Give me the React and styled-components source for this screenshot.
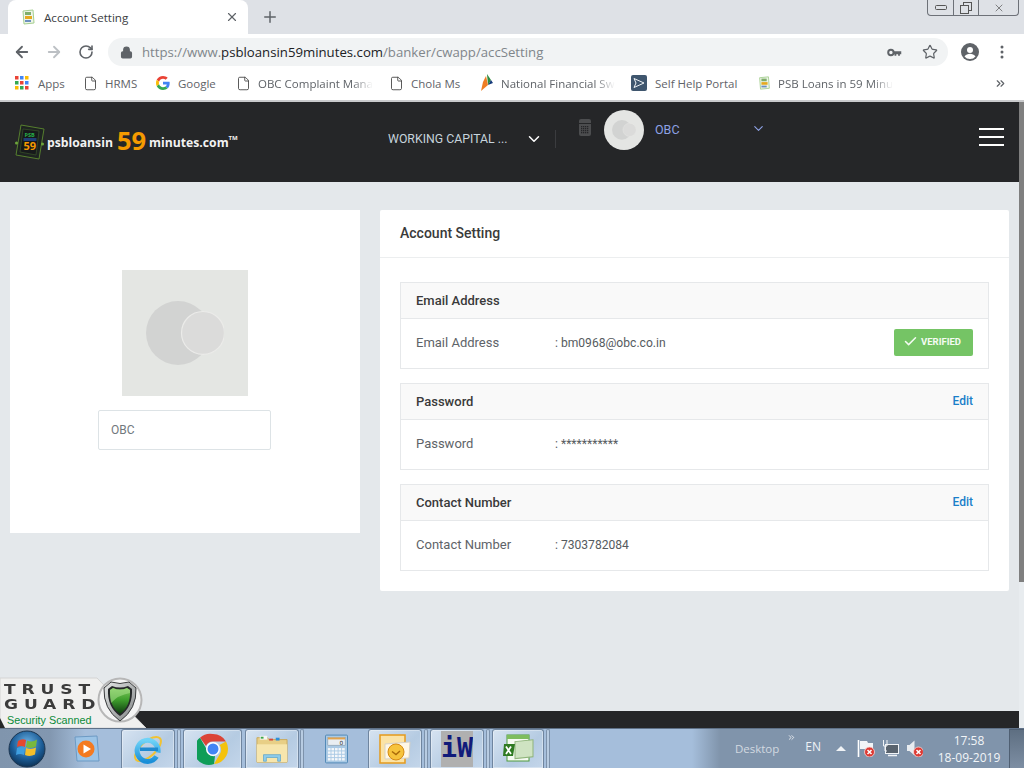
import React from 'react';
import styled, { createGlobalStyle } from 'styled-components';
import { ArrowLeft, ArrowRight, RotateCw, Lock, Star, X, Plus, File, Check, ChevronDown, ChevronsRight } from 'lucide-react';

const Global = createGlobalStyle`
  html, body { margin: 0; padding: 0; }
  body { font-family: Roboto, "Liberation Sans", sans-serif; background: #e4e8eb; }
  * { box-sizing: border-box; }
`;

const Screen = styled.div`
  position: relative;
  width: 1024px;
  height: 768px;
  overflow: hidden;
  display: flex;
  flex-direction: column;
`;

/* browser chrome */
const TabStrip = styled.div`
  height: 34px;
  background: #dee1e6;
  display: flex;
  align-items: flex-end;
  padding-left: 8px;
`;
const Tab = styled.div`
  width: 240px;
  height: 34px;
  background: #fff;
  border-radius: 8px 8px 0 0;
  display: flex;
  align-items: center;
  padding: 0 9px 0 12px;
  font-family: "Open Sans", sans-serif;
  font-size: 11.6px;
  color: #3c4043;
`;
const TabTitle = styled.span`
  flex: 1;
  margin-left: 8px;
`;
const NewTab = styled.div`
  margin: 0 0 4px 13px;
  height: 26px;
  display: flex;
  align-items: center;
  color: #5f6368;
`;
const WinControls = styled.div`
  margin: 0 5px 18px auto;
  width: 92px;
  height: 16px;
  display: flex;
  border: 1px solid #6d7178;
  border-top: none;
  border-radius: 0 0 4px 4px;
  color: #555;
`;
const WinButton = styled.div`
  width: ${p => p.$w}px;
  flex: none;
  display: flex;
  align-items: center;
  justify-content: center;
  & + & { border-left: 1px solid #6d7178; }
`;
const Toolbar = styled.div`
  height: 32px;
  background: #fff;
  display: flex;
  align-items: flex-end;
  color: #5f6368;
`;
const NavIcon = styled.div`
  width: 32px;
  height: 28px;
  display: flex;
  align-items: center;
  justify-content: center;
  color: ${p => p.$muted ? '#bcc0c4' : '#5f6368'};
`;
const NavGroup = styled.div`
  display: flex;
  padding-left: 6px;
  width: 108px;
`;
const Omnibox = styled.div`
  width: 840px;
  height: 28px;
  border-radius: 14px;
  background: #f1f3f4;
  display: flex;
  align-items: center;
  padding: 0 10px 0 12px;
  font-family: "Open Sans", sans-serif;
  font-size: 13.2px;
  color: #80868b;
`;
const UrlText = styled.span`
  flex: 1;
  margin-left: 9px;
  white-space: nowrap;
`;
const UrlHost = styled.span`
  color: #202124;
`;
const OmniIcon = styled.div`
  display: flex;
  align-items: center;
  margin-left: ${p => p.$gap || 0}px;
  color: #5f6368;
`;
const ToolbarEnd = styled.div`
  display: flex;
  align-items: center;
  height: 28px;
  margin-left: 13px;
  gap: 21px;
`;
const Bookmarks = styled.div`
  height: 36px;
  background: #fff;
  border-bottom: 2px solid #c9cacc;
  display: flex;
  align-items: center;
  padding-left: 15px;
  font-family: "Open Sans", sans-serif;
  font-size: 11.5px;
  color: #5f6368;
`;
const Bookmark = styled.div`
  width: ${p => p.$w}px;
  display: flex;
  align-items: center;
  flex: none;
  white-space: nowrap;
`;
const BookmarkLabel = styled.span`
  margin-left: ${p => p.$gap || 7}px;
  ${p => p.$fade && `
    -webkit-mask-image: linear-gradient(to right, #000 82%, transparent);
    mask-image: linear-gradient(to right, #000 82%, transparent);
  `}
`;
const BookmarkMore = styled.div`
  margin-left: auto;
  margin-right: 17px;
  display: flex;
  color: #5f6368;
`;

/* page */
const Viewport = styled.div`
  flex: 1;
  display: flex;
  min-height: 0;
`;
const Page = styled.div`
  flex: 1;
  display: flex;
  flex-direction: column;
  background: #e4e8eb;
`;
const ScrollTrack = styled.div`
  width: 5px;
  background: #e8ecef;
`;
const ScrollThumb = styled.div`
  height: 480px;
  background: #7f7f7f;
`;
const Header = styled.header`
  height: 80px;
  background: #252628;
  display: flex;
  align-items: flex-start;
  flex: none;
`;
const Logo = styled.div`
  width: 388px;
  height: 62px;
  padding: 18px 0 0 15px;
  display: flex;
  align-items: center;
  font-family: "Open Sans", sans-serif;
  font-weight: 700;
  color: #f2f2f2;
  font-size: 12.2px;
`;
const LogoWord = styled.span`
  margin-left: ${p => p.$gap || 0}px;
`;
const LogoNum = styled.span`
  margin: -4px 3px 0 4px;
  font-size: 25.500px;
  color: #f59a00;
`;
const LogoTm = styled.sup`
  font-size: 6px;
  margin-top: -8px;
  align-self: center;
`;
const Product = styled.div`
  width: 167px;
  height: 18px;
  margin-top: 28px;
  display: flex;
  align-items: center;
  justify-content: space-between;
  padding-right: 13px;
  font-size: 12.3px;
  color: #c6d3dc;
  white-space: nowrap;
`;
const ProductArrow = styled.div`
  display: flex;
  color: #fff;
  margin-right: -1px;
`;
const HeadDivider = styled.div`
  width: 1px;
  height: 18px;
  margin: 28px 23px 0 0;
  background: #3b3c3f;
`;
const CalcIcon = styled.div`
  margin: 17px 13px 0 0;
  display: flex;
`;
const Avatar = styled.div`
  width: 40px;
  height: 40px;
  margin-top: 8px;
  border-radius: 50%;
  background: #e4e5e3;
  display: flex;
  align-items: center;
  justify-content: center;
`;
const UserName = styled.div`
  width: 96px;
  margin: 21px 0 0 11px;
  font-size: 12.5px;
  line-height: 14px;
  color: #8ea2e6;
`;
const UserArrow = styled.div`
  margin-top: 19px;
  display: flex;
  color: #8ea2e6;
`;
const Burger = styled.div`
  margin: 26px 15px 0 auto;
  width: 25px;
  height: 18px;
  display: flex;
  flex-direction: column;
  justify-content: space-between;
`;
const BurgerLine = styled.span`
  height: 2px;
  background: #fff;
`;
const Main = styled.main`
  flex: 1;
  display: flex;
  align-items: flex-start;
  gap: 20px;
  padding: 28px 10px 0;
`;
const ProfileCard = styled.section`
  width: 350px;
  height: 323px;
  background: #fff;
  display: flex;
  flex-direction: column;
  align-items: center;
  padding-top: 60px;
`;
const PhotoBox = styled.div`
  width: 126px;
  height: 126px;
  background: #e4e6e3;
  display: flex;
  align-items: center;
  justify-content: center;
`;
const NameField = styled.div`
  width: 173px;
  height: 40px;
  margin: 14px 0 0 -1px;
  border: 1px solid #dde3e6;
  border-radius: 2px;
  padding: 0 12px;
  display: flex;
  align-items: center;
  font-size: 12px;
  color: #71787d;
`;
const SettingsCard = styled.section`
  width: 629px;
  background: #fff;
  border-radius: 2px;
  padding-bottom: 20px;
`;
const CardTitle = styled.h2`
  margin: 0;
  height: 48px;
  padding: 0 20px 1px;
  display: flex;
  align-items: center;
  border-bottom: 1px solid #eceeef;
  font-size: 14px;
  font-weight: 500;
  color: #3a3a3a;
`;
const SectionList = styled.div`
  display: flex;
  flex-direction: column;
  gap: 14px;
  padding: 24px 20px 0;
`;
const Section = styled.div`
  height: 87px;
  border: 1px solid #e6e8ea;
`;
const SectionHead = styled.div`
  height: 36px;
  background: #f9f9f9;
  border-bottom: 1px solid #e6e8ea;
  padding: 0 15px;
  display: flex;
  align-items: center;
  justify-content: space-between;
  font-size: 13px;
  font-weight: 500;
  color: #3a3a3a;
`;
const EditLink = styled.a`
  margin-top: -1px;
  font-size: 12px;
  font-weight: 500;
  color: #1a7fc9;
`;
const SectionBody = styled.div`
  height: 49px;
  padding: 0 15px 2px;
  display: flex;
  align-items: center;
  font-size: 13px;
  color: #5e6368;
`;
const RowLabel = styled.span`
  width: 139px;
`;
const RowValue = styled.span`
  font-size: 12.100px;
  color: #565b60;
`;
const VerifiedBadge = styled.div`
  margin-left: auto;
  width: 79px;
  height: 27px;
  background: #75c465;
  border-radius: 2px;
  display: flex;
  align-items: center;
  padding: 0 0 2px 9px;
  gap: 3px;
  font-size: 9.500px;
  font-weight: 700;
  color: #f4fbf2;
`;
const Footer = styled.footer`
  height: 17px;
  flex: none;
  background: #252628;
`;

/* trust guard seal */
const Seal = styled.div`
  position: absolute;
  left: 0;
  bottom: 40px;
  width: 146px;
  height: 51px;
`;
const SealBack = styled.svg`
  position: absolute;
  inset: 0;
`;
const SealText = styled.div`
  position: relative;
  padding: 5px 0 0 4px;
  width: 100px;
`;
const SealWord = styled.div`
  font-family: "DejaVu Sans", sans-serif;
  font-weight: 700;
  font-size: 14px;
  line-height: 15px;
  letter-spacing: 4.800px;
  color: #3b3b3b;
  transform: scaleX(1.22);
  transform-origin: left center;
`;
const SealCaption = styled.div`
  margin: 2px 0 0 3px;
  font-family: "Liberation Sans", sans-serif;
  font-size: 10.800px;
  line-height: 13px;
  white-space: nowrap;
  color: #0a8a38;
`;

/* windows taskbar */
const Taskbar = styled.div`
  height: 40px;
  flex: none;
  display: flex;
  align-items: stretch;
  border-top: 1px solid #5f7188;
  background: linear-gradient(to right, #8095ad 0, #8297b0 50px, #a5bedb 85px, #a5bedb 692px, #8094ab 720px, #8094ab 100%);
  color: #e9eef3;
  font-family: "Open Sans", "Noto Sans", sans-serif;
  font-size: 12px;
`;
const TaskSlot = styled.div`
  width: ${p => p.$w}px;
  margin-left: ${p => p.$ml || 0}px;
  flex: none;
  display: flex;
  align-items: center;
  justify-content: center;
  ${p => p.$framed && `
    border: 1px solid #6f859f;
    border-bottom: none;
    border-radius: 3px 3px 0 0;
    background: linear-gradient(135deg, #d6e3f1 0%, #b5cbe2 60%, #c4d6ea 100%);
    box-shadow: inset 0 0 0 1px rgba(255,255,255,.35);
  `}
`;
const TaskSep = styled.div`
  width: 4px;
  margin-left: ${p => p.$ml || 0}px;
  flex: none;
  border: 1px solid #7d92ab;
  border-bottom: none;
  border-radius: 2px 2px 0 0;
  background: #b8cce2;
`;
const Tray = styled.div`
  margin-left: auto;
  display: flex;
  align-items: center;
`;
const TrayLabel = styled.span`
  margin: ${p => p.$m || 0};
  font-size: ${p => p.$dim ? '11.500px' : '12px'};
  color: ${p => p.$dim ? '#d2d9e0' : '#eef2f6'};
`;
const TrayChevrons = styled.div`
  align-self: flex-start;
  margin-top: 4px;
  display: flex;
  color: #fff;
`;
const TrayArrow = styled.svg`
  margin: 0 11px 0 15px;
`;
const TrayIcons = styled.div`
  display: flex;
  align-items: center;
  gap: 7px;
`;
const Clock = styled.div`
  width: 76px;
  margin-left: 8px;
  text-align: center;
  line-height: 17px;
  font-size: 12px;
  color: #f2f5f8;
`;
const ShowDesktop = styled.div`
  width: 15px;
  height: 100%;
  margin-left: 2px;
  background: linear-gradient(to bottom, #5e6f82, #7d8ea3);
  border-left: 1px solid #4f5f72;
  border-top: 1px solid #4f5f72;
`;

const TabFavicon = ({ size = 16 }) => (
  <svg width={size} height={size} viewBox="0 0 16 16">
    <path d="M3 2 L13 1 L14 14 L4 15 Z" fill="#eef5ea" stroke="#a5cf8f" strokeWidth="1" />
    <rect x="5" y="3" width="6" height="3" fill="#7fae6a" />
    <rect x="5" y="7" width="7" height="3" fill="#e5a91f" />
    <rect x="5" y="11" width="6" height="2" fill="#6c8fc0" />
  </svg>
);

const GoogleG = () => (
  <svg width="14" height="14" viewBox="0 0 48 48">
    <path fill="#EA4335" d="M24 9.5c3.5 0 6.7 1.2 9.2 3.6l6.9-6.9C35.9 2.4 30.5 0 24 0 14.6 0 6.5 5.4 2.6 13.2l8 6.2C12.5 13.6 17.8 9.5 24 9.5z" />
    <path fill="#4285F4" d="M46.9 24.5c0-1.6-.1-3.100-.4-4.500H24v9h12.900c-.6 3-2.200 5.500-4.700 7.200l7.700 6c4.500-4.200 7-10.300 7-17.700z" />
    <path fill="#FBBC05" d="M10.600 28.600c-.5-1.400-.8-3-.8-4.600s.3-3.200.8-4.600l-8-6.200C.9 16.500 0 20.100 0 24s.9 7.500 2.600 10.800l8-6.200z" />
    <path fill="#34A853" d="M24 48c6.500 0 11.900-2.100 15.900-5.800l-7.700-6c-2.200 1.500-4.900 2.300-8.200 2.300-6.200 0-11.500-4.100-13.400-9.900l-8 6.200C6.500 42.600 14.600 48 24 48z" />
  </svg>
);

const AppsGrid = () => {
  const colors = ['#ea4335', '#4285f4', '#fbbc05', '#34a853', '#ea4335', '#4285f4', '#fbbc05', '#34a853', '#ea4335'];
  return (
    <svg width="14" height="14" viewBox="0 0 14 14">
      {colors.map((c, i) => (
        <rect key={i} x={(i % 3) * 5} y={Math.floor(i / 3) * 5} width="3.500" height="3.500" fill={c} />
      ))}
    </svg>
  );
};

const KeyIcon = () => (
  <svg width="15" height="9" viewBox="0 0 16 10">
    <circle cx="4" cy="5" r="3" fill="none" stroke="#5f6368" strokeWidth="2.200" />
    <path d="M7 3.500h8.500v3.500h-1.500v1.500h-2V7H10v1.500H8V7H7z" fill="#5f6368" />
  </svg>
);

const AccountIcon = () => (
  <svg width="18" height="18" viewBox="0 0 18 18">
    <circle cx="9" cy="9" r="9" fill="#5f6368" />
    <circle cx="9" cy="7" r="3" fill="#fff" />
    <path d="M3.500 13.500c1.200-2 3.400-2.800 5.500-2.800s4.300.8 5.500 2.800A7 7 0 0 1 9 16a7 7 0 0 1-5.500-2.500z" fill="#fff" />
  </svg>
);

const MoreDots = () => (
  <svg width="4" height="14" viewBox="0 0 4 14">
    <circle cx="2" cy="2" r="1.500" fill="#5f6368" />
    <circle cx="2" cy="7" r="1.500" fill="#5f6368" />
    <circle cx="2" cy="12" r="1.500" fill="#5f6368" />
  </svg>
);

const IndiaFlag = () => (
  <svg width="14" height="18" viewBox="0 0 14 18">
    <path d="M7 0 L11 6 L8 11 Z" fill="#2e8b3d" />
    <path d="M6 2 L8 11 L1 17 L3 8 Z" fill="#ef7d22" />
    <path d="M8 11 L11 6 L13 9 Z" fill="#163a7a" />
  </svg>
);

const PortalIcon = () => (
  <svg width="16" height="16" viewBox="0 0 16 16">
    <rect width="16" height="16" rx="2" fill="#3f566e" />
    <path d="M3 3.500 L13 8 L3 12.500 L5 8 Z" fill="none" stroke="#f0f3f6" strokeWidth="1" />
  </svg>
);

const LogoCard = () => (
  <svg width="30" height="36" viewBox="0 0 30 36">
    <path d="M6 1 L29 5 L24 35 L1 31 Z" fill="#1e2321" stroke="#567f2e" strokeWidth="1" />
    <path d="M8 5 L24 7 L21 31 L5 28 Z" fill="#17191b" stroke="#39542a" strokeWidth="0.700" />
    <text x="9.500" y="13" fontSize="5.500" fontWeight="700" fill="#27b04a" fontFamily="Open Sans">PSB</text>
    <rect x="8.500" y="14" width="13" height="3" fill="#1f3f78" />
    <text x="8.500" y="26" fontSize="11" fontWeight="700" fill="#f59a00" fontFamily="Open Sans">59</text>
    <circle cx="1.500" cy="19" r="1.500" fill="#6ea63c" />
    <circle cx="27.500" cy="20" r="1.500" fill="#6ea63c" />
  </svg>
);

const CalcGlyph = () => (
  <svg width="12" height="17" viewBox="0 0 12 17">
    <rect width="12" height="17" rx="2" fill="#4c4d4f" />
    <rect x="0" y="4" width="12" height="1" fill="#252628" />
    {[0, 1, 2, 3].map(r => [0, 1, 2, 3].map(c => (
      <rect key={`${r}-${c}`} x={2 + c * 2} y={7 + r * 2} width="1.300" height="1.300" fill="#252628" />
    )))}
  </svg>
);

const Moon = ({ size }) => (
  <svg width={size} height={size * 0.82} viewBox="0 0 78 64">
    <circle cx="32" cy="32" r="32" fill="#d2d3d2" />
    <circle cx="57" cy="32" r="21.500" fill="#dbdbda" stroke="#ebebe9" strokeWidth="1.200" />
  </svg>
);

const StartOrb = () => (
  <svg width="38" height="38" viewBox="0 0 38 38">
    <defs>
      <radialGradient id="orb" cx="50%" cy="35%" r="70%">
        <stop offset="0" stopColor="#6db4e8" />
        <stop offset="0.6" stopColor="#1b5c96" />
        <stop offset="1" stopColor="#0b2a4a" />
      </radialGradient>
    </defs>
    <circle cx="19" cy="19" r="18" fill="url(#orb)" stroke="#1c3550" />
    <path d="M10 11 Q14 8 18 10 L17 17 Q13 15 9 17 Z" fill="#e5482e" />
    <path d="M19 10.500 Q24 13 29 9.500 L28 16.500 Q23 19 18 17 Z" fill="#79b83d" />
    <path d="M9 18 Q13 16 17 18 L16 25 Q12 23 8 25 Z" fill="#3f9fe0" />
    <path d="M18 18 Q23 20 28 17.500 L27 24.500 Q22 27 17 25 Z" fill="#f6bf2a" />
  </svg>
);

const MediaIcon = () => (
  <svg width="30" height="30" viewBox="0 0 30 30">
    <path d="M2 3 L24 2 L26 27 L4 27 Z" fill="#9cc4e6" stroke="#6d9ac4" />
    <circle cx="13" cy="15" r="8.500" fill="#f47a20" />
    <path d="M10.500 10.500 L18 15 L10.500 19.500 Z" fill="#fff" />
  </svg>
);

const IeIcon = () => (
  <svg width="32" height="32" viewBox="0 0 32 32">
    <defs>
      <linearGradient id="ieBlue" x1="0" y1="0" x2="0" y2="1">
        <stop offset="0" stopColor="#6fd3f7" />
        <stop offset="1" stopColor="#1a8fd8" />
      </linearGradient>
    </defs>
    <ellipse cx="16" cy="16" rx="16" ry="7.500" fill="none" stroke="#f1c232" strokeWidth="2" transform="rotate(-42 16 16)" />
    <path d="M26 19.500A10.500 10.500 0 1 0 24.500 23.500" fill="none" stroke="url(#ieBlue)" strokeWidth="5" />
    <path d="M8 14.500h18v3.500H8z" fill="#1f8ad0" />
  </svg>
);

const ChromeIcon = () => (
  <svg width="32" height="32" viewBox="0 0 32 32">
    <path d="M16 1a15 15 0 0 1 13 7.500H16A7.500 7.500 0 0 0 9 13L3 4.800A15 15 0 0 1 16 1z" fill="#db4437" />
    <path d="M29 8.500A15 15 0 0 1 17 31l6.500-11.300A7.500 7.500 0 0 0 22.500 12z" fill="#f4c20d" />
    <path d="M3 4.800 9.500 16a7 7 0 0 0 8.500 7l-1 8A15 15 0 0 1 3 4.800z" fill="#0f9d58" />
    <circle cx="16" cy="16" r="7" fill="#fff" />
    <circle cx="16" cy="16" r="5.500" fill="#4285f4" />
  </svg>
);

const FolderIcon = () => (
  <svg width="32" height="30" viewBox="0 0 34 30">
    <path d="M1 3h11l2 2h19v24H1z" fill="#e8cf86" stroke="#c9a95a" />
    <rect x="4" y="1" width="8" height="4" fill="#f5f5f5" />
    <rect x="5" y="2" width="3" height="2" fill="#3ca648" />
    <rect x="14" y="4" width="4" height="2" fill="#d8463a" />
    <rect x="21" y="3" width="4" height="3" fill="#2f90d8" />
    <path d="M1 10h32v19H1z" fill="#f7e6ad" />
    <path d="M8 28v-7h18v7h-3v-4H11v4z" fill="#8fcdeb" stroke="#4f9ecb" strokeWidth="0.700" />
  </svg>
);

const CalcApp = () => (
  <svg width="23" height="30" viewBox="0 0 24 30">
    <rect x="0.500" y="0.500" width="23" height="29" rx="1" fill="#a9c9e4" stroke="#4d86b5" />
    <rect x="3" y="3" width="18" height="8" fill="#e9eef2" stroke="#7d8c98" strokeWidth="0.500" />
    <rect x="3" y="3" width="18" height="2" fill="#e2a34d" />
    <text x="15" y="10.500" fontSize="6" fill="#333" fontFamily="DejaVu Sans">0</text>
    {[0, 1, 2, 3].map(r => [0, 1, 2, 3, 4].map(c => (
      <rect key={`${r}-${c}`} x={3 + c * 3.700} y={14 + r * 3.500} width="2.800" height="2.500" fill="#f4f7fa" />
    )))}
  </svg>
);

const OutlookIcon = () => (
  <svg width="32" height="30" viewBox="0 0 32 30">
    <rect x="1" y="1" width="25" height="28" fill="#fbe3a6" stroke="#e59a1c" strokeWidth="1.500" />
    <path d="M6 10 L31 8 L30 24 L6 25 Z" fill="#fff7e6" stroke="#d7d2c6" />
    <circle cx="17" cy="18" r="8" fill="#f6c33c" stroke="#d68a12" />
    <path d="M13 17.500 L17 20.500 L21 17" fill="none" stroke="#a86a0a" strokeWidth="1.500" />
  </svg>
);

const IwIcon = () => (
  <svg width="32" height="36" viewBox="0 0 32 36">
    <rect width="32" height="36" fill="#b0b0b0" />
    <text x="0" y="26" fontSize="26" fontWeight="700" fill="#101a7a" fontFamily="DejaVu Sans Mono" textLength="32" lengthAdjust="spacingAndGlyphs">iW</text>
  </svg>
);

const ExcelIcon = () => (
  <svg width="32" height="30" viewBox="0 0 32 30">
    <rect x="5" y="1" width="22" height="26" fill="#f5faf1" stroke="#4c9a3c" />
    <rect x="5" y="1" width="22" height="4" fill="#7ebd5f" />
    <rect x="13" y="9" width="18" height="17" fill="#cfe3c2" stroke="#8fb47a" transform="skewY(-6)" />
    <path d="M2 10h11l-2 12H1z" fill="#2f7a22" />
    <path d="M4 12.500 L9 20 M9 12.500 L4 20" stroke="#fff" strokeWidth="1.800" />
  </svg>
);

const TrayBadge = () => (
  <g>
    <circle cx="12.500" cy="12" r="5" fill="#dd3a33" stroke="#f6dada" strokeWidth="0.800" />
    <path d="M10.500 10l4 4M14.500 10l-4 4" stroke="#fff" strokeWidth="1.500" />
  </g>
);

const FlagTray = () => (
  <svg width="18" height="17" viewBox="0 0 18 17">
    <path d="M1.500 0v17" stroke="#fff" strokeWidth="1.600" />
    <path d="M3 1h7l1 2h5v8H9l-1-2H3z" fill="#f2f5f8" />
    <TrayBadge />
  </svg>
);

const NetworkTray = () => (
  <svg width="17" height="17" viewBox="0 0 17 17">
    <rect x="3.500" y="4.500" width="13" height="9" fill="#59636e" stroke="#f0f3f6" />
    <path d="M6 15.500h9" stroke="#f0f3f6" strokeWidth="1.500" />
    <path d="M1.500 0v6h3.500V0M3 6v5H5" fill="none" stroke="#f0f3f6" />
  </svg>
);

const SoundTray = () => (
  <svg width="17" height="17" viewBox="0 0 17 17">
    <path d="M1 5h2.500l5-4.500v15l-5-4.500H1z" fill="#e8ecf0" />
    <TrayBadge />
  </svg>
);

const ShieldSeal = () => (
  <SealBack width="146" height="51" viewBox="0 0 146 51">
    <defs>
      <linearGradient id="shieldGreen" x1="0" y1="0" x2="0" y2="1">
        <stop offset="0" stopColor="#7ec95c" />
        <stop offset="0.45" stopColor="#3f9f2d" />
        <stop offset="1" stopColor="#0e3a10" />
      </linearGradient>
      <linearGradient id="shieldRim" x1="0" y1="0" x2="1" y2="1">
        <stop offset="0" stopColor="#e6e8e8" />
        <stop offset="1" stopColor="#7f8283" />
      </linearGradient>
    </defs>
    <path d="M0 1 H97 L146 51 H0 Z" fill="#f0f0ef" stroke="#d4d4d4" />
    <path d="M0 41 V51 H5 Z" fill="#252628" />
    <circle cx="120" cy="23" r="21.500" fill="#f4f4f4" stroke="#b7b7b7" strokeWidth="2" />
    <path d="M104 11 L111 5 Q120 8 129 5 L136 11 Q137 32 120 44 Q103 32 104 11 Z" fill="url(#shieldRim)" stroke="#3a3c3d" strokeWidth="1" />
    <path d="M108 12 L112 9 Q120 12 128 9 L132 12 Q133 30 120 39 Q107 30 108 12 Z" fill="#26282a" />
    <path d="M110 13 L113 11 Q120 14 127 11 L130 13 Q131 29 120 37 Q109 29 110 13 Z" fill="url(#shieldGreen)" />
    <path d="M110 13 L113 11 Q120 14 127 11 L130 13 L130 16 Q118 18 111 26 Q110 20 110 13 Z" fill="#a9e08c" opacity="0.55" />
  </SealBack>
);

const fileIcon = <File size={15} strokeWidth={1.4} color="#444" />;

const bookmarks = [
  { w: 68, icon: <AppsGrid />, label: 'Apps', gap: 9 },
  { w: 73, icon: fileIcon, label: 'HRMS' },
  { w: 80, icon: <GoogleG />, label: 'Google', gap: 8 },
  { w: 153, icon: fileIcon, label: 'OBC Complaint Mana', fade: true },
  { w: 91, icon: fileIcon, label: 'Chola Ms' },
  { w: 151, icon: <IndiaFlag />, label: 'National Financial Sw', fade: true },
  { w: 126, icon: <PortalIcon />, label: 'Self Help Portal', gap: 8 },
  { w: 136, icon: <TabFavicon />, label: 'PSB Loans in 59 Minu', fade: true },
];

const sections = [
  { title: 'Email Address', label: 'Email Address', value: ': bm0968@obc.co.in', verified: true },
  { title: 'Password', label: 'Password', value: ': ***********', edit: true },
  { title: 'Contact Number', label: 'Contact Number', value: ': 7303782084', edit: true },
];

export default function App() {
  return (
    <Screen>
      <Global />
      <TabStrip>
        <Tab>
          <TabFavicon />
          <TabTitle>Account Setting</TabTitle>
          <X size={14} color="#5f6368" strokeWidth={2} />
        </Tab>
        <NewTab><Plus size={18} strokeWidth={2} /></NewTab>
        <WinControls>
          <WinButton $w={25}>
            <svg width="12" height="6" viewBox="0 0 12 6"><rect x="0.500" y="0.500" width="11" height="4" rx="1" fill="none" stroke="#555" /></svg>
          </WinButton>
          <WinButton $w={25}>
            <svg width="12" height="12" viewBox="0 0 12 12"><rect x="3.500" y="0.500" width="8" height="8" fill="none" stroke="#555" /><rect x="0.500" y="3.500" width="8" height="8" fill="#dee1e6" stroke="#555" /></svg>
          </WinButton>
          <WinButton $w={40}><X size={12} strokeWidth={1.4} /></WinButton>
        </WinControls>
      </TabStrip>
      <Toolbar>
        <NavGroup>
          <NavIcon><ArrowLeft size={18} strokeWidth={2.400} /></NavIcon>
          <NavIcon $muted><ArrowRight size={18} strokeWidth={2.400} /></NavIcon>
          <NavIcon><RotateCw size={16} strokeWidth={2.400} /></NavIcon>
        </NavGroup>
        <Omnibox>
          <Lock size={13} strokeWidth={2.500} fill="#5f6368" color="#5f6368" />
          <UrlText>https://www.<UrlHost>psbloansin59minutes.com</UrlHost>/banker/cwapp/accSetting</UrlText>
          <OmniIcon><KeyIcon /></OmniIcon>
          <OmniIcon $gap={20}><Star size={16} strokeWidth={1.800} /></OmniIcon>
        </Omnibox>
        <ToolbarEnd>
          <AccountIcon />
          <MoreDots />
        </ToolbarEnd>
      </Toolbar>
      <Bookmarks>
        {bookmarks.map(b => (
          <Bookmark key={b.label} $w={b.w}>
            {b.icon}
            <BookmarkLabel $gap={b.gap} $fade={b.fade}>{b.label}</BookmarkLabel>
          </Bookmark>
        ))}
        <BookmarkMore><ChevronsRight size={13} strokeWidth={2.200} /></BookmarkMore>
      </Bookmarks>

      <Viewport>
        <Page>
          <Header>
            <Logo>
              <LogoCard />
              <LogoWord $gap={2}>psbloansin</LogoWord>
              <LogoNum>59</LogoNum>
              <LogoWord>minutes.com</LogoWord>
              <LogoTm>TM</LogoTm>
            </Logo>
            <Product>
              WORKING CAPITAL ...
              <ProductArrow><ChevronDown size={18} strokeWidth={2} /></ProductArrow>
            </Product>
            <HeadDivider />
            <CalcIcon><CalcGlyph /></CalcIcon>
            <Avatar><Moon size={24} /></Avatar>
            <UserName>OBC</UserName>
            <UserArrow><ChevronDown size={15} strokeWidth={1.800} /></UserArrow>
            <Burger>
              <BurgerLine /><BurgerLine /><BurgerLine />
            </Burger>
          </Header>
          <Main>
            <ProfileCard>
              <PhotoBox><Moon size={78} /></PhotoBox>
              <NameField>OBC</NameField>
            </ProfileCard>
            <SettingsCard>
              <CardTitle>Account Setting</CardTitle>
              <SectionList>
                {sections.map(s => (
                  <Section key={s.title}>
                    <SectionHead>
                      {s.title}
                      {s.edit && <EditLink>Edit</EditLink>}
                    </SectionHead>
                    <SectionBody>
                      <RowLabel>{s.label}</RowLabel>
                      <RowValue>{s.value}</RowValue>
                      {s.verified && (
                        <VerifiedBadge><Check size={15} strokeWidth={2.400} />VERIFIED</VerifiedBadge>
                      )}
                    </SectionBody>
                  </Section>
                ))}
              </SectionList>
            </SettingsCard>
          </Main>
          <Footer />
        </Page>
        <ScrollTrack><ScrollThumb /></ScrollTrack>
      </Viewport>

      <Taskbar>
        <TaskSlot $w={38} $ml={8}><StartOrb /></TaskSlot>
        <TaskSlot $w={30} $ml={27}><MediaIcon /></TaskSlot>
        <TaskSlot $w={54} $ml={18} $framed><IeIcon /></TaskSlot>
        <TaskSep $ml={2} />
        <TaskSlot $w={59} $ml={2} $framed><ChromeIcon /></TaskSlot>
        <TaskSlot $w={54} $ml={3} $framed><FolderIcon /></TaskSlot>
        <TaskSep $ml={1} />
        <TaskSlot $w={63} $ml={1}><CalcApp /></TaskSlot>
        <TaskSlot $w={54} $framed><OutlookIcon /></TaskSlot>
        <TaskSep $ml={2} />
        <TaskSlot $w={54} $ml={2} $framed><IwIcon /></TaskSlot>
        <TaskSep $ml={2} />
        <TaskSlot $w={52} $ml={2} $framed><ExcelIcon /></TaskSlot>
        <TaskSep $ml={2} />
        <Tray>
          <TrayLabel $dim $m="0 8px 0 0">Desktop</TrayLabel>
          <TrayChevrons><ChevronsRight size={9} strokeWidth={2} /></TrayChevrons>
          <TrayLabel $m="-5px 0 0 9px">EN</TrayLabel>
          <TrayArrow width="10" height="6" viewBox="0 0 10 6"><path d="M5 0 L10 5 H0 Z" fill="#f0f3f6" /></TrayArrow>
          <TrayIcons>
            <FlagTray />
            <NetworkTray />
            <SoundTray />
          </TrayIcons>
          <Clock>17:58<br />18-09-2019</Clock>
          <ShowDesktop />
        </Tray>
      </Taskbar>

      <Seal>
        <ShieldSeal />
        <SealText>
          <SealWord>TRUST</SealWord>
          <SealWord>GUARD</SealWord>
          <SealCaption>Security Scanned</SealCaption>
        </SealText>
      </Seal>
    </Screen>
  );
}
